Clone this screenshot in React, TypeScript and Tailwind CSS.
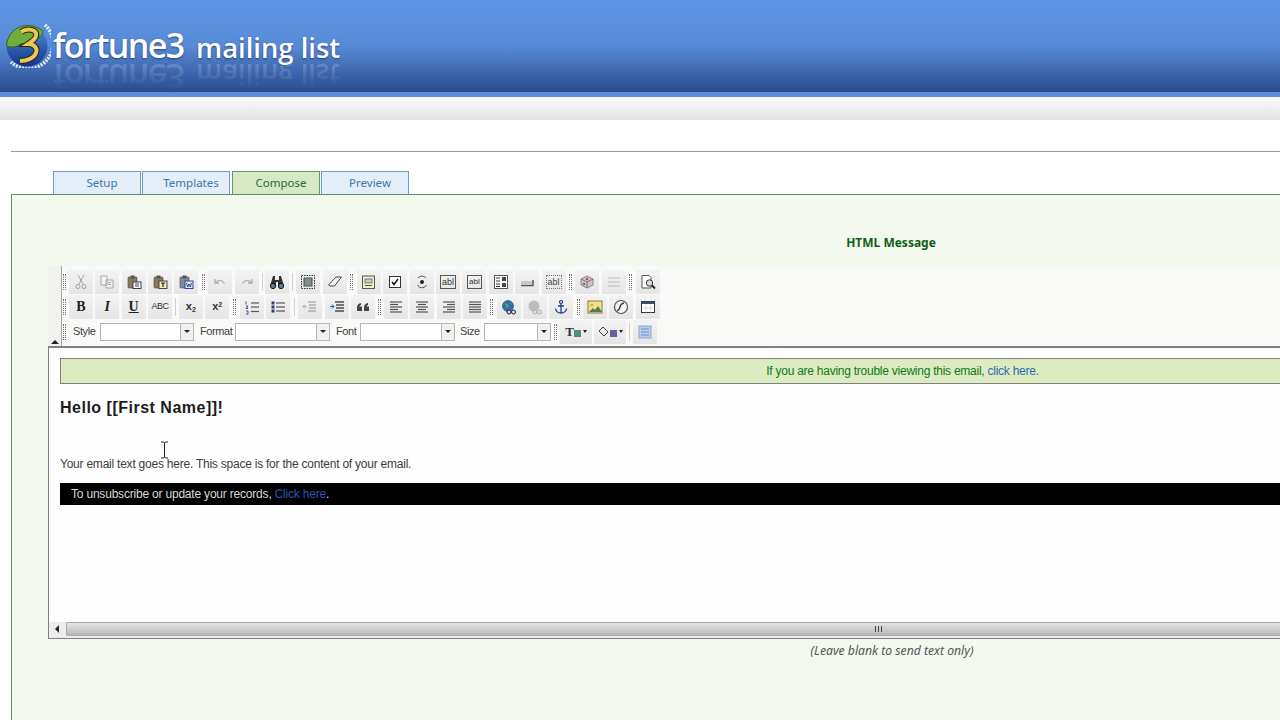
import React from 'react';

const sans = "font-['Liberation_Sans',Arial,sans-serif]";
const tahoma = "font-['Noto_Sans',Tahoma,sans-serif]";

const Ico: React.FC<{ children: React.ReactNode; dim?: boolean }> = ({ children, dim }) => (
  <svg viewBox="0 0 16 16" className={`w-4 h-4 ${dim ? 'opacity-40' : ''}`} fill="none">
    {children}
  </svg>
);

const Lines: React.FC<{ ys: number[]; x1?: number[]; x2?: number[]; color?: string }> = ({ ys, x1, x2, color = '#555' }) => (
  <>
    {ys.map((y, i) => (
      <line key={i} x1={x1 ? x1[i] : 2} x2={x2 ? x2[i] : 14} y1={y} y2={y} stroke={color} strokeWidth="1.2" />
    ))}
  </>
);

const Board: React.FC<{ fill?: string }> = ({ fill = '#8a7a5c' }) => (
  <>
    <rect x="2" y="3" width="9" height="11" rx="1" fill={fill} stroke="#444" strokeWidth="0.6" />
    <rect x="4.5" y="1.5" width="4" height="3" fill="#555" />
  </>
);

const icons: Record<string, React.ReactNode> = {
  cut: (
    <Ico dim>
      <path d="M5 1l5 9M11 1L6 10" stroke="#333" strokeWidth="1" />
      <circle cx="5" cy="12.5" r="2" stroke="#333" />
      <circle cx="11" cy="12.5" r="2" stroke="#333" />
    </Ico>
  ),
  copy: (
    <Ico dim>
      <path d="M2 2h6v9H2zM7 6h7v8H7z" fill="#fff" stroke="#444" />
      <path d="M9 8.5h3M9 10.5h3" stroke="#444" />
    </Ico>
  ),
  paste: (
    <Ico>
      <Board />
      <rect x="7" y="8" width="8" height="6.5" fill="#fff" stroke="#345" />
      <path d="M9 10h4M9 12h4" stroke="#345" />
    </Ico>
  ),
  pasteText: (
    <Ico>
      <Board />
      <rect x="7" y="7" width="8" height="7.5" fill="#f3efb8" stroke="#444" />
      <path d="M9 9h4M11 9v4" stroke="#222" strokeWidth="1.2" />
    </Ico>
  ),
  pasteWord: (
    <Ico>
      <Board fill="#7f8a9c" />
      <rect x="7" y="7" width="8" height="7.5" fill="#dfe8fa" stroke="#2a4a9a" />
      <path d="M8.5 9l1.2 4 1.3-3 1.3 3 1.2-4" stroke="#2a4a9a" />
    </Ico>
  ),
  undo: (
    <Ico dim>
      <path d="M3 5v4h4M3.5 9C6 5.5 10 5.5 12.5 9.5" stroke="#456" strokeWidth="1.3" />
    </Ico>
  ),
  redo: (
    <Ico dim>
      <path d="M13 5v4H9M12.5 9C10 5.5 6 5.5 3.5 9.5" stroke="#456" strokeWidth="1.3" />
    </Ico>
  ),
  find: (
    <Ico>
      <path d="M4 2h2v4h4V2h2l3 10H9V8H7v4H1z" fill="#333" />
      <circle cx="4" cy="12" r="2.6" fill="#5d7f9c" stroke="#111" />
      <circle cx="12" cy="12" r="2.6" fill="#5d7f9c" stroke="#111" />
    </Ico>
  ),
  selectAll: (
    <Ico>
      <rect x="1.5" y="1.5" width="13" height="13" stroke="#333" strokeDasharray="1.5 1" />
      <rect x="4" y="4" width="8" height="8" fill="#9db4a0" stroke="#445" />
      <path d="M4 6h8M4 8h8M4 10h8" stroke="#445" strokeWidth="0.6" />
    </Ico>
  ),
  eraser: (
    <Ico>
      <path d="M1.5 11L9 3h5.5l-7 9H3z" fill="#f4f4f4" stroke="#444" />
    </Ico>
  ),
  form: (
    <Ico>
      <rect x="1.5" y="2" width="12" height="12.5" fill="#f3eebd" stroke="#555" />
      <rect x="4" y="5" width="7" height="4" fill="#b9cdea" stroke="#345" strokeWidth="0.6" />
      <path d="M4 11.5h7" stroke="#555" />
    </Ico>
  ),
  checkbox: (
    <Ico>
      <rect x="2.5" y="2.5" width="11" height="11" fill="#fff" stroke="#333" />
      <path d="M5 8l2 2.5L11 5" stroke="#111" strokeWidth="1.5" />
    </Ico>
  ),
  radio: (
    <Ico>
      <path d="M12 4a5 5 0 0 0-8 0M3.5 11a5 5 0 0 0 9 0" stroke="#555" />
      <circle cx="8" cy="8" r="2" fill="#222" />
    </Ico>
  ),
  select: (
    <Ico>
      <rect x="1.5" y="1.5" width="13" height="13" fill="#fff" stroke="#555" />
      <path d="M3 4h4M3 7h4M3 10h4M3 12.5h4" stroke="#333" />
      <rect x="9" y="3" width="4" height="4" fill="#444" />
      <rect x="9" y="9" width="4" height="4" fill="#444" />
    </Ico>
  ),
  button: (
    <Ico>
      <path d="M2 11.5h12V6" stroke="#555" strokeWidth="1.5" />
      <rect x="2" y="7" width="11" height="4" fill="#c8c8c8" />
    </Ico>
  ),
  hidden: (
    <Ico>
      <path d="M8 2l6 3v6l-6 3-6-3V5z" fill="#d8c0c0" stroke="#888" />
      <path d="M2 5l6 3 6-3M8 8v6" stroke="#777" />
      <circle cx="8" cy="5" r="1.2" fill="#c44" />
      <circle cx="5" cy="10" r="1.2" fill="#57a" />
    </Ico>
  ),
  rule: <Ico dim><Lines ys={[4, 8, 12]} color="#888" /></Ico>,
  preview: (
    <Ico>
      <path d="M2 1.5h7l2 2V14H2z" fill="#fff" stroke="#555" />
      <circle cx="9.5" cy="9" r="3.2" fill="#cfe0ea" stroke="#333" />
      <path d="M12 11.5l3 3" stroke="#222" strokeWidth="1.8" />
    </Ico>
  ),
  ol: (
    <Ico>
      <path d="M2 2.5v3M2 7h2l-2 2.5h2M2 12h2v3H2" stroke="#2c4a90" strokeWidth="0.9" />
      <Lines ys={[4, 8, 12.5]} x1={[7, 7, 7]} x2={[15, 15, 15]} />
    </Ico>
  ),
  ul: (
    <Ico>
      <rect x="1.5" y="2.5" width="3" height="3" fill="#2c3f78" />
      <rect x="1.5" y="6.5" width="3" height="3" fill="#2c3f78" />
      <rect x="1.5" y="10.5" width="3" height="3" fill="#2c3f78" />
      <Lines ys={[4, 8, 12]} x1={[6, 6, 6]} x2={[15, 15, 15]} />
    </Ico>
  ),
  outdent: (
    <Ico dim>
      <Lines ys={[3, 6, 9, 12]} x1={[6, 7, 7, 6]} x2={[14, 14, 14, 14]} color="#222" />
      <path d="M5 7.5H1M3 5.5l-2 2 2 2" stroke="#06c" />
    </Ico>
  ),
  indent: (
    <Ico>
      <Lines ys={[3, 6, 9, 12]} x1={[6, 7, 7, 6]} x2={[15, 15, 15, 15]} color="#222" />
      <path d="M1 7.5h4M3 5.5l2 2-2 2" stroke="#06c" />
    </Ico>
  ),
  quote: (
    <Ico>
      <path d="M2 12V8.5C2 6 3.5 4.5 6 4v2c-1 .3-1.5 1-1.5 1.5H7V12zM9 12V8.5C9 6 10.5 4.5 13 4v2c-1 .3-1.5 1-1.5 1.5H14V12z" fill="#444" />
    </Ico>
  ),
  left: <Ico><Lines ys={[3, 5.5, 8, 10.5, 13]} x2={[14, 10, 14, 10, 14]} /></Ico>,
  center: <Ico><Lines ys={[3, 5.5, 8, 10.5, 13]} x1={[2, 4, 2, 4, 2]} x2={[14, 12, 14, 12, 14]} /></Ico>,
  right: <Ico><Lines ys={[3, 5.5, 8, 10.5, 13]} x1={[2, 6, 2, 6, 2]} /></Ico>,
  justify: <Ico><Lines ys={[3, 5.5, 8, 10.5, 13]} /></Ico>,
  link: (
    <Ico>
      <circle cx="7" cy="7" r="5.5" fill="#2d6db5" stroke="#1c3f70" strokeWidth="0.6" />
      <path d="M4 4l3 1 1 3-3 1zM9 3l2 2-1 1z" fill="#5aa04a" />
      <circle cx="8" cy="13" r="2" fill="#ddd" stroke="#222" />
      <circle cx="12.5" cy="13" r="2" fill="#ddd" stroke="#222" />
    </Ico>
  ),
  unlink: (
    <Ico dim>
      <circle cx="7" cy="7" r="5.5" fill="#777" />
      <circle cx="8" cy="13" r="2" fill="#ddd" stroke="#555" />
      <circle cx="12.5" cy="13" r="2" fill="#ddd" stroke="#555" />
    </Ico>
  ),
  anchor: (
    <Ico>
      <circle cx="8" cy="3" r="1.5" stroke="#1d3f8f" strokeWidth="1.2" />
      <path d="M8 4.5V14M5 7h6M2.5 9.5c.5 3 3 4.5 5.5 4.5s5-1.5 5.5-4.5" stroke="#1d3f8f" strokeWidth="1.3" />
    </Ico>
  ),
  image: (
    <Ico>
      <rect x="1" y="2" width="14" height="12" fill="#f3e08a" stroke="#8a7a3a" />
      <circle cx="5" cy="6" r="1.5" fill="#e9a52f" />
      <path d="M2 13l4-4 2 2 3-4 4 6z" fill="#4d7a5a" />
    </Ico>
  ),
  flash: (
    <Ico>
      <circle cx="8" cy="8" r="6.5" fill="#f4f4f4" stroke="#555" strokeWidth="1.2" />
      <path d="M11 4C8 4.5 7.5 6 7 8s-1.5 3.5-3 4" stroke="#444" strokeWidth="1.5" />
    </Ico>
  ),
  table: (
    <Ico>
      <rect x="1.5" y="2.5" width="13" height="11" fill="#fff" stroke="#333" />
      <rect x="1.5" y="2.5" width="13" height="2.5" fill="#3a4a6a" />
      <path d="M1.5 9h13M6 5v8.5M10.5 5v8.5" stroke="#ccc" strokeWidth="0.6" />
    </Ico>
  ),
  blocks: (
    <Ico>
      <rect x="2" y="2" width="12" height="12" fill="#b9cdf0" stroke="#8fa5cc" />
      <path d="M4 5h8M4 8h8M4 11h8" stroke="#6f8cc4" />
    </Ico>
  ),
};

const Tile: React.FC<{ children: React.ReactNode; w?: string }> = ({ children, w = 'w-6' }) => (
  <div className={`${w} h-6 flex items-center justify-center rounded-[1px] bg-gradient-to-b from-[#f3f3f3] to-[#e5e5e5]`}>
    {children}
  </div>
);

// gripper between toolbar groups, width keeps the tile pitch right
const Grip: React.FC<{ w: number; thin?: boolean }> = ({ w, thin }) => (
  <div className="flex justify-center" style={{ width: w }}>
    {thin ? (
      <div className="w-[1px] h-[18px] bg-[#cfcfcf]" />
    ) : (
      <div className="w-[3px] h-[16px] border-x border-dotted border-[#777]" />
    )}
  </div>
);

const Label: React.FC<{ children: React.ReactNode; w: string }> = ({ children, w }) => (
  <span className={`${w} text-[11px] tracking-[-0.4px] text-[#444] ${sans}`}>{children}</span>
);

const Combo: React.FC<{ w: string }> = ({ w }) => (
  <div className={`${w} h-[18px] flex justify-end bg-white border border-[#b5b5b5]`}>
    <div className="w-[13px] flex items-center justify-center bg-[#f0f0f0] border-l border-[#b5b5b5]">
      <div className="border-x-[3px] border-x-transparent border-t-[3px] border-t-[#222]" />
    </div>
  </div>
);

const tb = (k: string) => <Tile key={k}>{icons[k]}</Tile>;

const Toolbar: React.FC = () => (
  <div className="flex h-[80px] bg-[#f9f9f7]">
    <div className="w-[13px] pb-[2px] flex items-end justify-center bg-[#f1f1ef]">
      <div className="border-x-[4px] border-x-transparent border-b-[4px] border-b-[#222]" />
    </div>
    <div className="pt-[3px] flex flex-col border-l border-[#a8a8a8]">
      <div className="flex items-center gap-[2.4px] h-[25px]">
        <Grip w={4.5} />
        {['cut', 'copy', 'paste', 'pasteText', 'pasteWord'].map(tb)}
        <Grip w={5} />
        {['undo', 'redo'].map(tb)}
        <Grip w={2} thin />
        {tb('find')}
        <Grip w={2} thin />
        {['selectAll', 'eraser'].map(tb)}
        <Grip w={5.5} />
        {['form', 'checkbox', 'radio'].map(tb)}
        <Tile>
          <span className={`text-[9px] text-[#333] border border-[#555] px-[1px] leading-[12px] ${sans}`}>abl</span>
        </Tile>
        <Tile>
          <span className={`text-[8px] text-[#333] border border-[#555] px-[1px] leading-[12px] ${sans}`}>abl</span>
        </Tile>
        {tb('select')}
        {tb('button')}
        <Tile>
          <span className={`text-[9px] text-[#444] border border-dotted border-[#777] px-[1px] leading-[12px] ${sans}`}>abl</span>
        </Tile>
        <Grip w={5} />
        {['hidden', 'rule'].map(tb)}
        <Grip w={5} />
        {tb('preview')}
      </div>
      <div className="flex items-center gap-[2.4px] h-[25px]">
        <Grip w={4.5} />
        <Tile><span className="font-['Liberation_Serif',serif] font-bold text-[14px] text-[#222]">B</span></Tile>
        <Tile><span className="font-['Liberation_Serif',serif] font-bold italic text-[14px] text-[#222]">I</span></Tile>
        <Tile><span className="font-['Liberation_Serif',serif] font-bold underline text-[14px] text-[#222]">U</span></Tile>
        <Tile><span className={`text-[9px] text-[#333] tracking-[-0.5px] ${sans}`}>ABC</span></Tile>
        <Grip w={2} thin />
        <Tile><span className={`font-bold text-[11px] text-[#333] ${sans}`}>x<sub className="text-[7px]">2</sub></span></Tile>
        <Tile><span className={`font-bold text-[11px] text-[#333] ${sans}`}>x<sup className="text-[7px]">2</sup></span></Tile>
        <Grip w={6} />
        {['ol', 'ul'].map(tb)}
        <Grip w={3} thin />
        {['outdent', 'indent', 'quote'].map(tb)}
        <Grip w={4} />
        {['left', 'center', 'right', 'justify'].map(tb)}
        <Grip w={5} />
        {['link', 'unlink', 'anchor'].map(tb)}
        <Grip w={4.5} />
        {['image', 'flash', 'table'].map(tb)}
      </div>
      <div className="flex items-center h-[25px]">
        <Grip w={4.5} />
        <div className="w-[6.5px]" />
        <Label w="w-[27px]">Style</Label>
        <Combo w="w-[94px]" />
        <div className="w-[6px]" />
        <Label w="w-[35px]">Format</Label>
        <Combo w="w-[95px]" />
        <div className="w-[6px]" />
        <Label w="w-[24px]">Font</Label>
        <Combo w="w-[95px]" />
        <div className="w-[5px]" />
        <Label w="w-[24px]">Size</Label>
        <Combo w="w-[67px]" />
        <Grip w={9} />
        <Tile w="w-[32px]">
          <span className="font-['Liberation_Serif',serif] font-bold text-[13px] text-[#333]">T</span>
          <span className="w-[7px] h-[7px] mt-1 bg-[#4f8f7f]" />
          <span className="ml-[2px] border-x-[2.5px] border-x-transparent border-t-[3px] border-t-[#222]" />
        </Tile>
        <div className="w-[2px]" />
        <Tile w="w-[32px]">
          <svg viewBox="0 0 12 12" className="w-3 h-3" fill="none">
            <path d="M5 1l5 5-4 4-5-5z" fill="#eee" stroke="#444" />
          </svg>
          <span className="w-[7px] h-[7px] mt-1 bg-[#6f5f9f]" />
          <span className="ml-[2px] border-x-[2.5px] border-x-transparent border-t-[3px] border-t-[#222]" />
        </Tile>
        <Grip w={7} thin />
        {tb('blocks')}
      </div>
    </div>
  </div>
);

const Logo: React.FC = () => (
  <svg viewBox="0 0 46 46" className="w-[46px] h-[46px]" fill="none">
    <defs>
      <linearGradient id="sea" x1="0" y1="0" x2="0" y2="1">
        <stop offset="0" stopColor="#4f8fdc" />
        <stop offset="1" stopColor="#12348a" />
      </linearGradient>
    </defs>
    <circle cx="22" cy="24" r="20.5" fill="url(#sea)" />
    <path d="M1.5 24C2 13 10 4 22 3.5c6 0 11 1.5 16 6-1 6-8 8-12 10-5 3-10 1-13 4-3 2-7 2-11.5.5z" fill="#6fae3a" stroke="#2f5a1a" strokeWidth="0.9" />
    <path d="M40 3a22.5 22.5 0 0 1-34 37" stroke="#fff" strokeWidth="3.5" strokeDasharray="2 1.2" opacity="0.85" />
    <path d="M16 10C22 6 33 7 31 14c-1 4-5 6-8 8 6 0 10 4 8 9-2 5-9 8-16 8" stroke="#2a1e06" strokeWidth="6" />
    <path d="M16 10C22 6 33 7 31 14c-1 4-5 6-8 8 6 0 10 4 8 9-2 5-9 8-16 8" stroke="#e8c85a" strokeWidth="4" />
  </svg>
);

const Brand: React.FC = () => (
  <div className="flex items-baseline font-['Open_Sans',sans-serif] font-semibold text-white">
    <span className="w-[143px] text-[34px] leading-[26px] tracking-[-1.6px]">fortune3</span>
    <span className="text-[27.4px] leading-[26px]">mailing list</span>
  </div>
);

const tabs = [
  { name: 'Setup', ml: '' },
  { name: 'Templates', ml: '' },
  { name: 'Compose', ml: 'ml-[1px]', active: true },
  { name: 'Preview', ml: '' },
];

export default function App() {
  return (
    <div className="relative w-[1280px] h-[720px] overflow-hidden bg-white">
      <header className="relative h-[92px] flex items-start pt-[22px] pl-[5px] bg-gradient-to-b from-[#5f96e4] via-[#588ad6] to-[#2a4c8e]">
        <Logo />
        <div className="ml-[2px] mt-[10px] [text-shadow:0_1px_2px_rgba(20,40,90,0.7)]">
          <Brand />
        </div>
        {/* reflection of the wordmark */}
        <div
          className="absolute left-[53px] top-[61px] -scale-y-100 opacity-[0.2] blur-[0.5px] [mask-image:linear-gradient(to_top,black,transparent)]"
          aria-hidden="true"
        >
          <Brand />
        </div>
      </header>
      <div className="h-[5px] bg-[#5b8edb]" />
      <div className="h-[23px] bg-gradient-to-b from-[#fbfbfb] to-[#e2e2e2]" />

      <div className="h-[31px] ml-[11px] border-b border-[#9a9a9a] box-content" />

      <div className="flex gap-[1px] h-[23px] mt-[19px] ml-[53px]">
        {tabs.map((t) => (
          <div
            key={t.name}
            className={`w-[88px] ${t.ml} pl-[10px] flex items-center justify-center border border-b-0 text-[11.5px] ${tahoma} ${
              t.active
                ? 'bg-[#d6e9c3] border-[#5e9a6e] text-[#2c6a3a]'
                : 'bg-[#e3eefa] border-[#6b9fc4] text-[#3a78a8]'
            }`}
          >
            {t.name}
          </div>
        ))}
      </div>

      <main className="w-[1800px] h-[600px] ml-[11px] border-l border-t border-[#5a8f68] bg-[#f3f9ee]">
        <div className={`w-[1758px] pt-[40px] text-center font-bold text-[12px] leading-[16px] text-[#0f5f12] ${tahoma}`}>
          HTML Message
        </div>
        <div className="ml-[36px] mt-[15px] w-[1696px]">
          <Toolbar />
          <div className="h-[276px] border-l border-t-2 border-[#808080] bg-[#fefefe] pt-[10px] pl-[11px]">
            <div className={`h-[26px] flex items-center justify-center border border-[#808080] border-r-0 bg-[#dcebc0] text-[12px] tracking-[-0.25px] text-[#0f7a1a] ${sans}`}>
              <span>
                If you are having trouble viewing this email, <span className="text-[#2c6db0]">click here.</span>
              </span>
            </div>
            <div className={`mt-[14px] font-bold text-[16px] leading-[20px] tracking-[0.5px] text-[#1c1c1c] ${sans}`}>
              Hello [[First Name]]!
            </div>
            <div className={`mt-[38px] text-[12px] leading-[16px] tracking-[-0.23px] text-[#3c3c3c] ${sans}`}>
              Your email text goes here. This space is for the content of your email.
            </div>
            <div className={`mt-[11px] h-[22px] pl-[11px] flex items-center bg-black text-[12px] tracking-[-0.2px] text-[#d8d8d8] ${sans}`}>
              <span>
                To unsubscribe or update your records, <span className="text-[#2a55b8]">Click here</span>.
              </span>
            </div>
          </div>
          <div className="h-[17px] flex items-start border-l border-b border-[#808080] bg-[#ececec]">
            <div className="w-[16px] h-[14px] flex items-center justify-center">
              <div className="border-y-[4px] border-y-transparent border-r-[4px] border-r-[#222]" />
            </div>
            <div className="w-[1624px] h-[14px] ml-[1px] flex items-center justify-center rounded-[1px] border border-[#aaa] bg-gradient-to-b from-[#e4e4e4] to-[#b8b8b8]">
              <div className="w-[7px] h-[6px] border-x border-[#444] flex justify-center">
                <div className="w-[1px] h-[6px] bg-[#444]" />
              </div>
            </div>
          </div>
        </div>
        <div className={`w-[1760px] mt-[4px] text-center italic text-[12.2px] leading-[16px] text-[#555] ${tahoma}`}>
          (Leave blank to send text only)
        </div>
      </main>

      {/* mouse cursor over the message */}
      <svg viewBox="0 0 9 18" className="absolute left-[160px] top-[441px] w-[9px] h-[18px]" fill="none">
        <path d="M1 1h2.5l1 1 1-1H8M4.5 2v14M1 17h2.5l1-1 1 1H8" stroke="#222" />
      </svg>
    </div>
  );
}
